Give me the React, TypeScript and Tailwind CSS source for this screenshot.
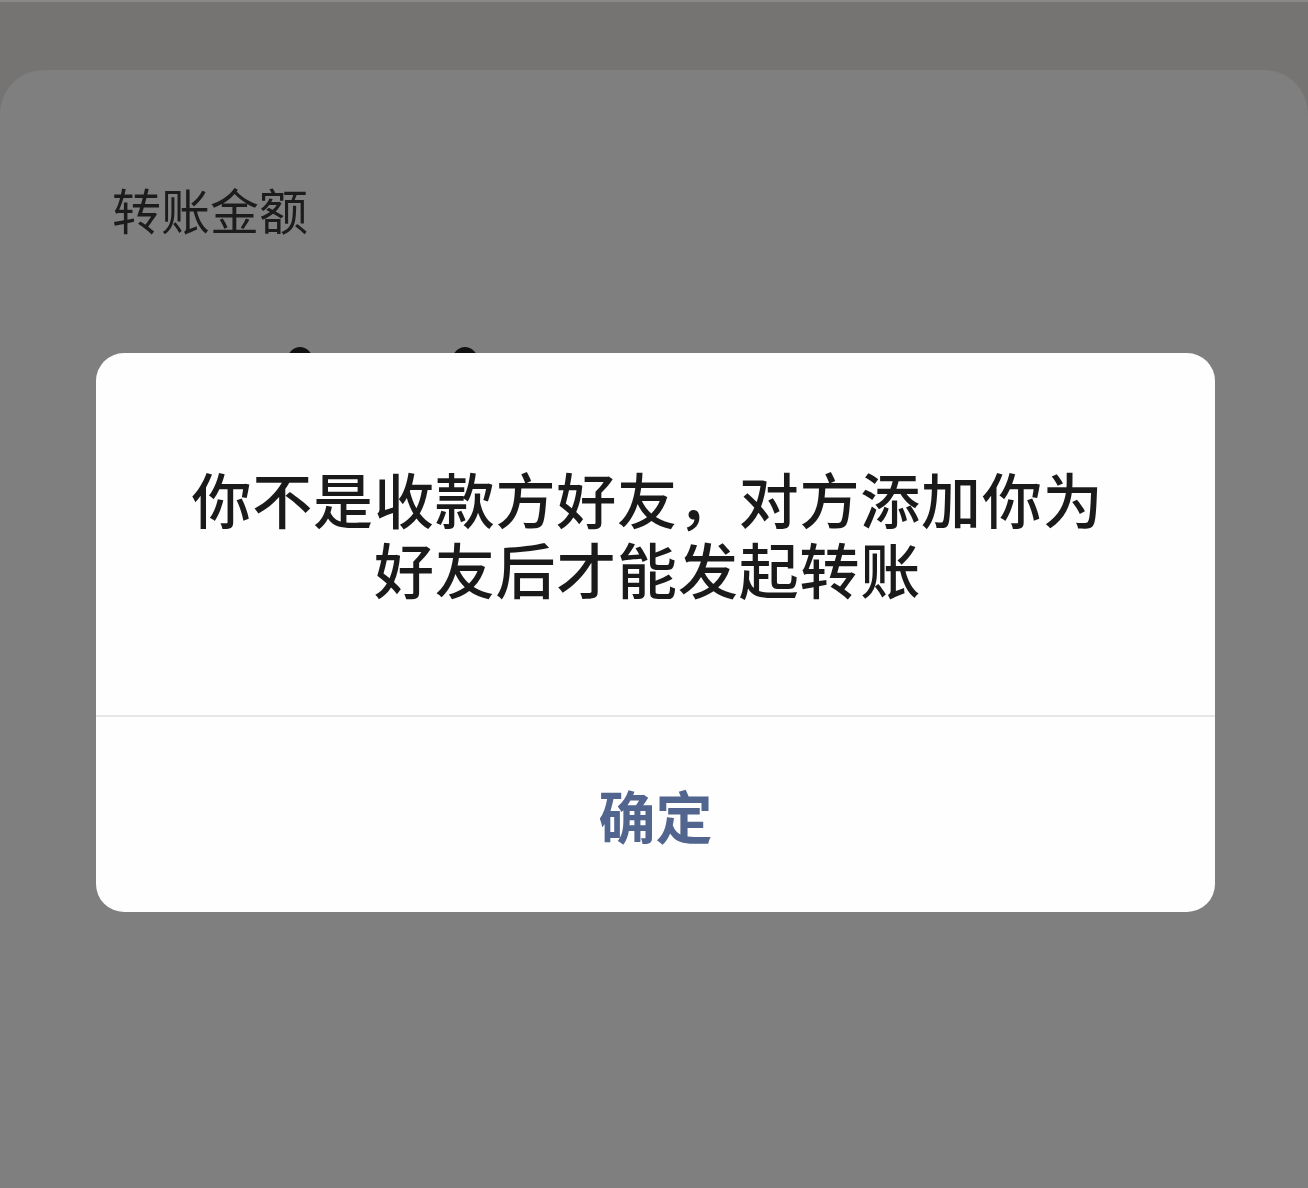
export default function App() {
  return (
    <div
      className="relative flex h-[1188px] w-[1308px] flex-col overflow-hidden bg-[#757473]"
      style={{ fontFamily: '"Noto Sans CJK SC", "Noto Sans", sans-serif' }}
    >
      <div className="h-[2px] bg-[#8a8988]" />
      <div className="h-[68px]" />

      <div className="flex-1 rounded-t-[44px] bg-[#7f7f7f] px-[112px] pt-[111px]">
        <div className="text-[49px] leading-[56px] text-[#1c1c1c]">转账金额</div>
        <div className="mt-[110px] flex gap-[141px] pl-[176px]">
          <div className="h-[24px] w-[24px] rounded-full bg-[#111]" />
          <div className="h-[24px] w-[24px] rounded-full bg-[#111]" />
        </div>
      </div>

      <div className="absolute left-[96px] top-[353px] flex h-[559px] w-[1119px] flex-col rounded-[28px] bg-[#fefefe]">
        <div className="flex h-[364px] flex-col items-center justify-center border-b-2 border-[#e6e6e8] pb-[2px] pr-[16px]">
          <div className="text-center text-[60px] font-medium leading-[70px] tracking-[0.8px] text-[#1a1a1a]">
            你不是收款方好友，对方添加你为
          </div>
          <div className="text-center text-[60px] font-medium leading-[70px] tracking-[0.8px] text-[#1a1a1a]">
            好友后才能发起转账
          </div>
        </div>
        <button className="flex flex-1 items-center justify-center text-[57px] font-bold leading-none text-[#52658f]">
          确定
        </button>
      </div>
    </div>
  );
}
